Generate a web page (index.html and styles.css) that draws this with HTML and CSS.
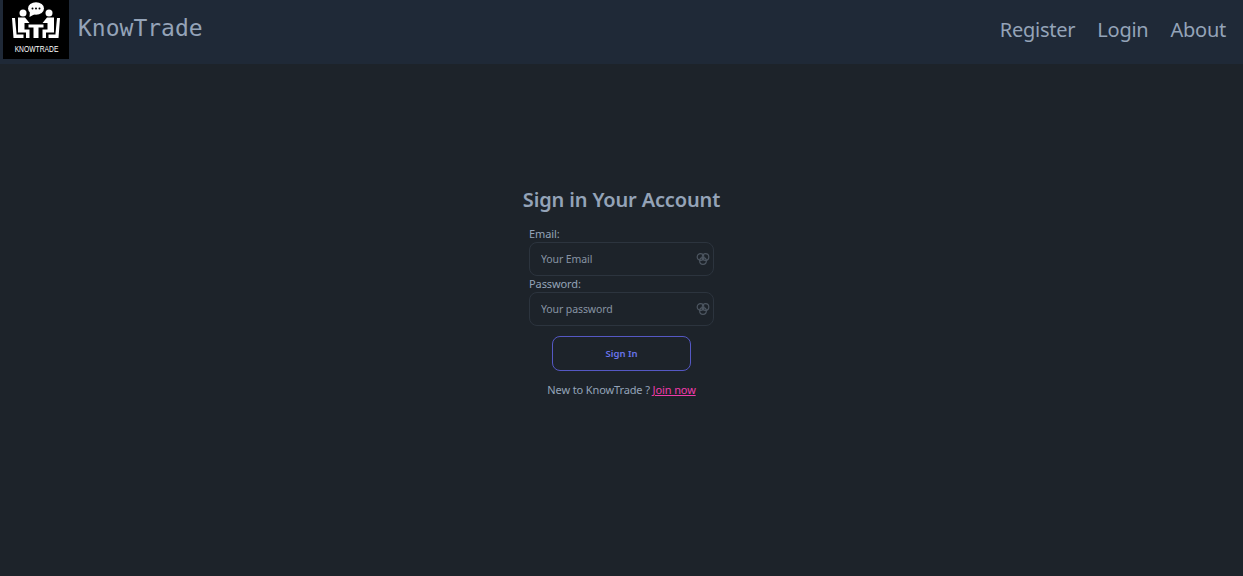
FILE: index.html
```html
<!DOCTYPE html>
<html lang="en">

<head>
    <meta charset="UTF-8">
    <meta name="viewport" content="width=device-width, initial-scale=1.0">
    <title>KnowTrade</title>
    <link rel="stylesheet" href="styles.css">
</head>

<body>
    <nav class="navbar">
        <a class="brand" href="#">
            <svg class="logo" viewBox="0 0 66 59" xmlns="http://www.w3.org/2000/svg">
                <rect width="66" height="59" fill="#000"/>
                <!-- speech bubble -->
                <ellipse cx="33" cy="8.500" rx="8" ry="6.200" fill="#fff"/>
                <path d="M27 11 L26.500 17 L32 14 Z" fill="#fff"/>
                <circle cx="29.500" cy="8.500" r="1" fill="#000"/>
                <circle cx="33" cy="8.500" r="1" fill="#000"/>
                <circle cx="36.500" cy="8.500" r="1" fill="#000"/>
                <!-- people -->
                <circle cx="20" cy="13" r="3.500" fill="#fff"/>
                <circle cx="46" cy="13" r="3.500" fill="#fff"/>
                <path d="M15 17.500 H22 L26.500 23 H21.500 V29.500 H26.500 V38 H23 V32.500 H15 Z" fill="#fff"/>
                <path d="M51 17.500 H44 L39.500 23 H44.500 V29.500 H39.500 V38 H43 V32.500 H51 Z" fill="#fff"/>
                <!-- table -->
                <path d="M25.500 24.500 H40.500 V27.500 H35.500 V38 H30.500 V27.500 H25.500 Z" fill="#fff"/>
                <!-- chairs -->
                <path d="M9 18 H12 L13.500 33.500 V34.500 H20.500 V38 H10.500 Z" fill="#fff"/>
                <path d="M57 18 H54 L52.500 33.500 V34.500 H45.500 V38 H55.500 Z" fill="#fff"/>
                <text class="logo-text" transform="scale(0.75 1)" x="44.700" y="52" text-anchor="middle">KNOWTRADE</text>
            </svg>
            <span class="brand-name">KnowTrade</span>
        </a>
        <div class="nav-links">
            <a href="#">Register</a>
            <a href="#">Login</a>
            <a href="#">About</a>
        </div>
    </nav>

    <main class="page">
        <form class="signin">
            <h1>Sign in Your Account</h1>
            <div class="fields">
                <label for="email">Email:</label>
                <div class="input-box">
                    <input id="email" type="email" placeholder="Your Email">
                    <svg class="field-icon" viewBox="0 0 14 14" xmlns="http://www.w3.org/2000/svg">
                        <circle cx="4.500" cy="5" r="3.300"/>
                        <circle cx="9.500" cy="5" r="3.300"/>
                        <circle cx="7" cy="9" r="3.300"/>
                    </svg>
                </div>
                <label for="password">Password:</label>
                <div class="input-box">
                    <input id="password" type="password" placeholder="Your password">
                    <svg class="field-icon" viewBox="0 0 14 14" xmlns="http://www.w3.org/2000/svg">
                        <circle cx="4.500" cy="5" r="3.300"/>
                        <circle cx="9.500" cy="5" r="3.300"/>
                        <circle cx="7" cy="9" r="3.300"/>
                    </svg>
                </div>
            </div>
            <button class="btn" type="submit">Sign In</button>
            <p class="join">New to KnowTrade ? <a href="#">Join now</a></p>
        </form>
    </main>
</body>

</html>
```

FILE: styles.css
```css
* {
  box-sizing: border-box;
}

body {
  margin: 0;
  min-height: 576px;
  background-color: #1d232a;
  color: #a6adbb;
  font-family: "Noto Sans", "Open Sans", sans-serif;
}

a {
  color: inherit;
  text-decoration: none;
}

.navbar {
  display: flex;
  align-items: flex-start;
  justify-content: space-between;
  height: 64px;
  padding: 0 17px 0 3px;
  background-color: #1f2937;
}

.brand {
  display: flex;
  align-items: flex-start;
  gap: 9px;
}

.logo {
  display: block;
  width: 66px;
  height: 59px;
}

.logo-text {
  fill: #fff;
  font-family: "Liberation Sans", sans-serif;
  font-size: 9px;
}

.brand-name {
  margin-top: 12px;
  color: #94a3b8;
  font-family: "DejaVu Sans Mono", monospace;
  font-size: 23px;
  line-height: 32px;
}

.nav-links {
  display: flex;
  gap: 22px;
  margin-top: 14px;
  color: #94a3b8;
  font-size: 20px;
  line-height: 32px;
  letter-spacing: -0.25px;
}

.page {
  display: flex;
  justify-content: center;
  padding-top: 122px;
}

.signin {
  display: flex;
  flex-direction: column;
  align-items: center;
  width: 200px;
}

h1 {
  margin: 0;
  color: #94a3b8;
  font-size: 20px;
  font-weight: 600;
  line-height: 28px;
  letter-spacing: -0.15px;
  white-space: nowrap;
}

.fields {
  display: flex;
  flex-direction: column;
  width: 185px;
  margin-top: 12px;
}

label {
  color: #94a3b8;
  font-size: 11px;
  line-height: 16px;
  letter-spacing: -0.1px;
}

.input-box {
  position: relative;
  height: 34px;
  border: 1px solid #2c343e;
  border-radius: 8px;
}

input {
  width: 100%;
  height: 100%;
  padding: 0 28px 0 11px;
  border: none;
  outline: none;
  background: transparent;
  color: #a6adbb;
  font-family: inherit;
  font-size: 10.5px;
  letter-spacing: -0.1px;
}

input::placeholder {
  color: #8793a3;
}

.field-icon {
  position: absolute;
  top: 9px;
  right: 3px;
  width: 14px;
  height: 14px;
  fill: none;
  stroke: #4d5661;
  stroke-width: 1.200;
}

.btn {
  width: 139px;
  height: 35px;
  margin-top: 10px;
  border: 1px solid #5558c4;
  border-radius: 8px;
  background: transparent;
  color: #6a74ea;
  font-family: inherit;
  font-size: 9.5px;
  font-weight: 600;
}

.join {
  margin: 11px 0 0;
  color: #94a3b8;
  font-size: 11px;
  line-height: 16px;
  letter-spacing: -0.12px;
  white-space: nowrap;
}

.join a {
  color: #f03bab;
  text-decoration: underline;
}
```
